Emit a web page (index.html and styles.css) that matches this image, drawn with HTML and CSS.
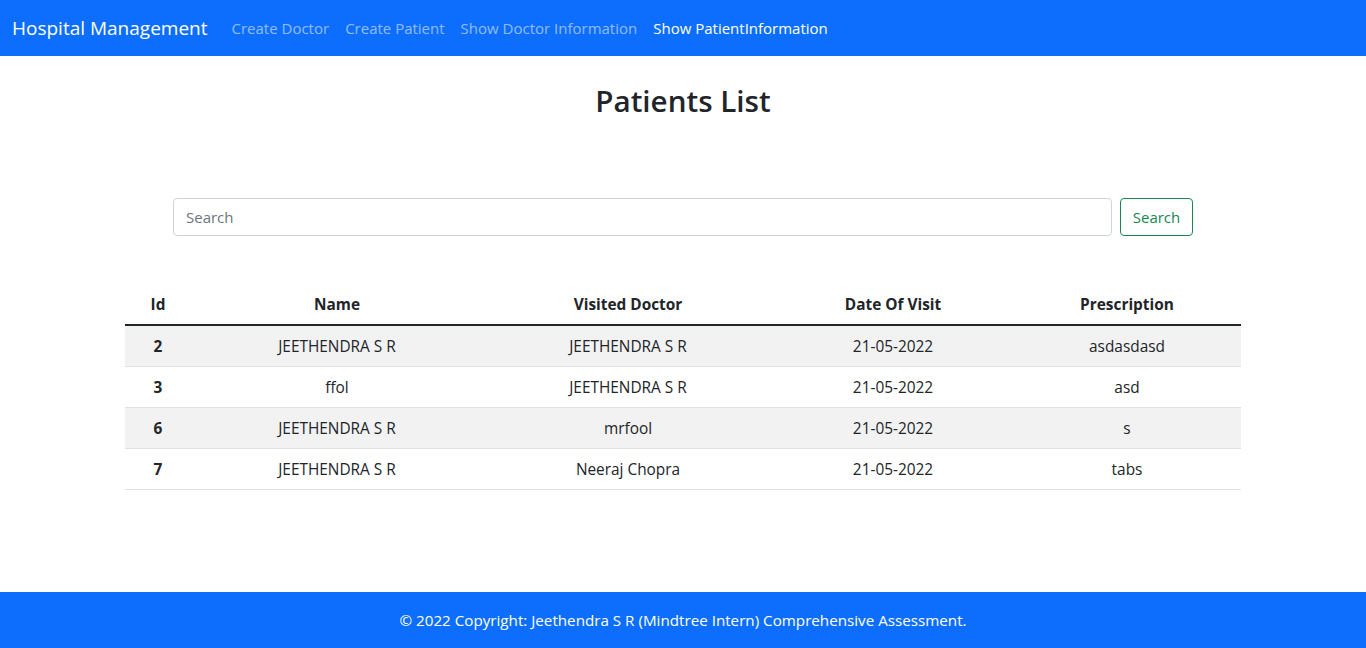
FILE: index.html
```html
<!DOCTYPE html>
<html lang="en">
<head>
<meta charset="utf-8">
<title>Hospital Management</title>
<link rel="stylesheet" href="styles.css">
</head>
<body>
<div class="page">
  <nav class="navbar">
    <a class="brand" href="#">Hospital Management</a>
    <ul class="nav">
      <li><a class="nav-link" href="#">Create Doctor</a></li>
      <li><a class="nav-link" href="#">Create Patient</a></li>
      <li><a class="nav-link" href="#">Show Doctor Information</a></li>
      <li><a class="nav-link active" href="#">Show PatientInformation</a></li>
    </ul>
  </nav>

  <main class="container">
    <h2 class="title">Patients List</h2>
    <form class="search-form">
      <input class="search-input" type="search" placeholder="Search">
      <button class="btn-search" type="button">Search</button>
    </form>
    <table class="table">
      <colgroup>
        <col class="c-id"><col class="c-name"><col class="c-doc"><col class="c-date"><col class="c-pres">
      </colgroup>
      <thead>
        <tr><th>Id</th><th>Name</th><th>Visited Doctor</th><th>Date Of Visit</th><th>Prescription</th></tr>
      </thead>
      <tbody>
        <tr class="odd"><th>2</th><td>JEETHENDRA S R</td><td>JEETHENDRA S R</td><td>21-05-2022</td><td>asdasdasd</td></tr>
        <tr><th>3</th><td>ffol</td><td>JEETHENDRA S R</td><td>21-05-2022</td><td>asd</td></tr>
        <tr class="odd"><th>6</th><td>JEETHENDRA S R</td><td>mrfool</td><td>21-05-2022</td><td>s</td></tr>
        <tr><th>7</th><td>JEETHENDRA S R</td><td>Neeraj Chopra</td><td>21-05-2022</td><td>tabs</td></tr>
      </tbody>
    </table>
  </main>

  <footer class="footer">© 2022 Copyright: Jeethendra S R (Mindtree Intern) Comprehensive Assessment.</footer>
</div>
</body>
</html>
```

FILE: styles.css
```css
* { box-sizing: border-box; }
html, body { margin: 0; padding: 0; }
body {
  font-family: "Open Sans", "Noto Sans", sans-serif;
  font-size: 15px;
  color: #212529;
  background: #fff;
}
.page {
  min-height: 648px;
  display: flex;
  flex-direction: column;
}
.navbar {
  height: 56px;
  background: #0d6efd;
  display: flex;
  align-items: center;
  padding: 0 12px;
}
.brand {
  color: #fff;
  font-size: 19px;
  text-decoration: none;
  margin-right: 16px;
}
.nav {
  list-style: none;
  margin: 0;
  padding: 0;
  display: flex;
}
.nav-link {
  display: block;
  padding: 8px 8px;
  color: rgba(255,255,255,.55);
  text-decoration: none;
  font-size: 15px;
}
.nav-link.active { color: #fff; }

.container {
  width: 1140px;
  margin: 0 auto;
  padding: 0 12px;
  flex: 1;
}
.title {
  text-align: center;
  font-size: 29.6px;
  font-weight: 600;
  margin: 24px 0 0;
  line-height: 42px;
}
.search-form {
  display: flex;
  gap: 8px;
  margin: 76px 48px 0;
}
.search-input {
  flex: 1;
  height: 38px;
  border: 1px solid #ced4da;
  border-radius: 4px;
  padding: 6px 12px;
  font: inherit;
  color: #212529;
}
.search-input::placeholder { color: #6c757d; }
.btn-search {
  width: 73px;
  height: 38px;
  border: 1px solid #198754;
  border-radius: 4px;
  background: #fff;
  color: #198754;
  font: inherit;
}
.table {
  width: 100%;
  border-collapse: collapse;
  margin-top: 47px;
  table-layout: fixed;
  font-size: 15.4px;
}
.c-id { width: 66px; }
.c-name { width: 292px; }
.c-doc { width: 290px; }
.c-date { width: 240px; }
.c-pres { width: 228px; }
.table th, .table td {
  text-align: center;
  padding: 9px 8px 7px;
  height: 41px;
  border-bottom: 1px solid #dee2e6;
  font-weight: 400;
}
.table th { font-weight: 700; }
.table thead th {
  border-bottom: 2px solid #212529;
  height: 42px;
}
.table tr.odd { background: #f2f2f2; }

.footer {
  height: 56px;
  background: #0d6efd;
  color: #fff;
  display: flex;
  align-items: center;
  justify-content: center;
  font-size: 15.2px;
}
```
